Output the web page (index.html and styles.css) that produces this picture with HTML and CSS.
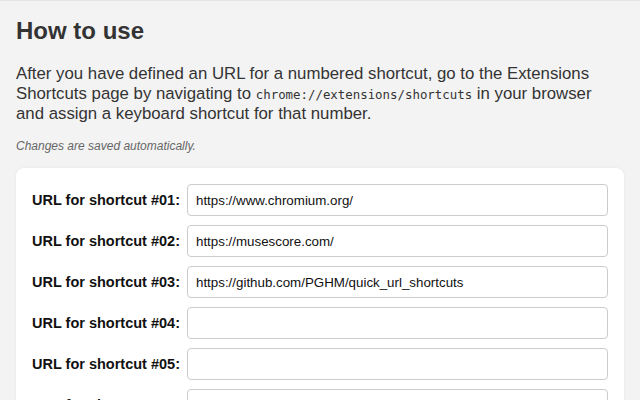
FILE: index.html
```html
<!DOCTYPE html>
<html>
<head>
<meta charset="utf-8">
<link rel="stylesheet" href="styles.css">
</head>
<body>
<main class="page">
  <h1 class="title">How to use</h1>
  <p class="intro">After you have defined an URL for a numbered shortcut, go to the Extensions Shortcuts page by navigating to <code class="code">chrome://extensions/shortcuts</code> in your browser and assign a keyboard shortcut for that number.</p>
  <p class="note">Changes are saved automatically.</p>
  <section class="card">
    <div class="row"><label class="label">URL for shortcut #01:</label><input class="field" type="text" value="https://www.chromium.org/"></div>
    <div class="row"><label class="label">URL for shortcut #02:</label><input class="field" type="text" value="https://musescore.com/"></div>
    <div class="row"><label class="label">URL for shortcut #03:</label><input class="field" type="text" value="https://github.com/PGHM/quick_url_shortcuts"></div>
    <div class="row"><label class="label">URL for shortcut #04:</label><input class="field" type="text" value=""></div>
    <div class="row"><label class="label">URL for shortcut #05:</label><input class="field" type="text" value=""></div>
    <div class="row"><label class="label">URL for shortcut #06:</label><input class="field" type="text" value=""></div>
  </section>
</main>
</body>
</html>
```
FILE: styles.css
```css
html, body {
  margin: 0;
  padding: 0;
  background: #f3f3f3;
}
body {
  font-family: "Liberation Sans", Arial, sans-serif;
  color: #333;
  border-top: 1px solid #e4e4e4;
}
.page {
  padding: 0 16px;
}
.title {
  margin: 0;
  padding-top: 16px;
  font-size: 24px;
  line-height: 28px;
  font-weight: bold;
  color: #333;
}
.intro {
  margin: 19px 0 0;
  font-size: 16.8px;
  line-height: 20px;
  color: #333;
}
.code {
  font-family: "DejaVu Sans Mono", monospace;
  font-size: 12.4px;
  line-height: 1;
}
.note {
  margin: 15px 0 0;
  font-size: 12px;
  line-height: 14px;
  font-style: italic;
  color: #666;
}
.card {
  margin-top: 15px;
  background: #fff;
  border-radius: 8px;
  box-shadow: 0 0 3px rgba(0,0,0,0.06);
  padding: 16px;
  display: flex;
  flex-direction: column;
  gap: 9px;
}
.row {
  display: flex;
  align-items: center;
}
.label {
  width: 155px;
  flex: none;
  font-size: 14.5px;
  font-weight: bold;
  color: #111;
}
.field {
  flex: 1;
  height: 32px;
  box-sizing: border-box;
  border: 1px solid #ccc;
  border-radius: 4px;
  padding: 0 8px;
  font-family: "Liberation Sans", Arial, sans-serif;
  font-size: 13.33px;
  color: #111;
  background: #fff;
  outline: none;
}
```
